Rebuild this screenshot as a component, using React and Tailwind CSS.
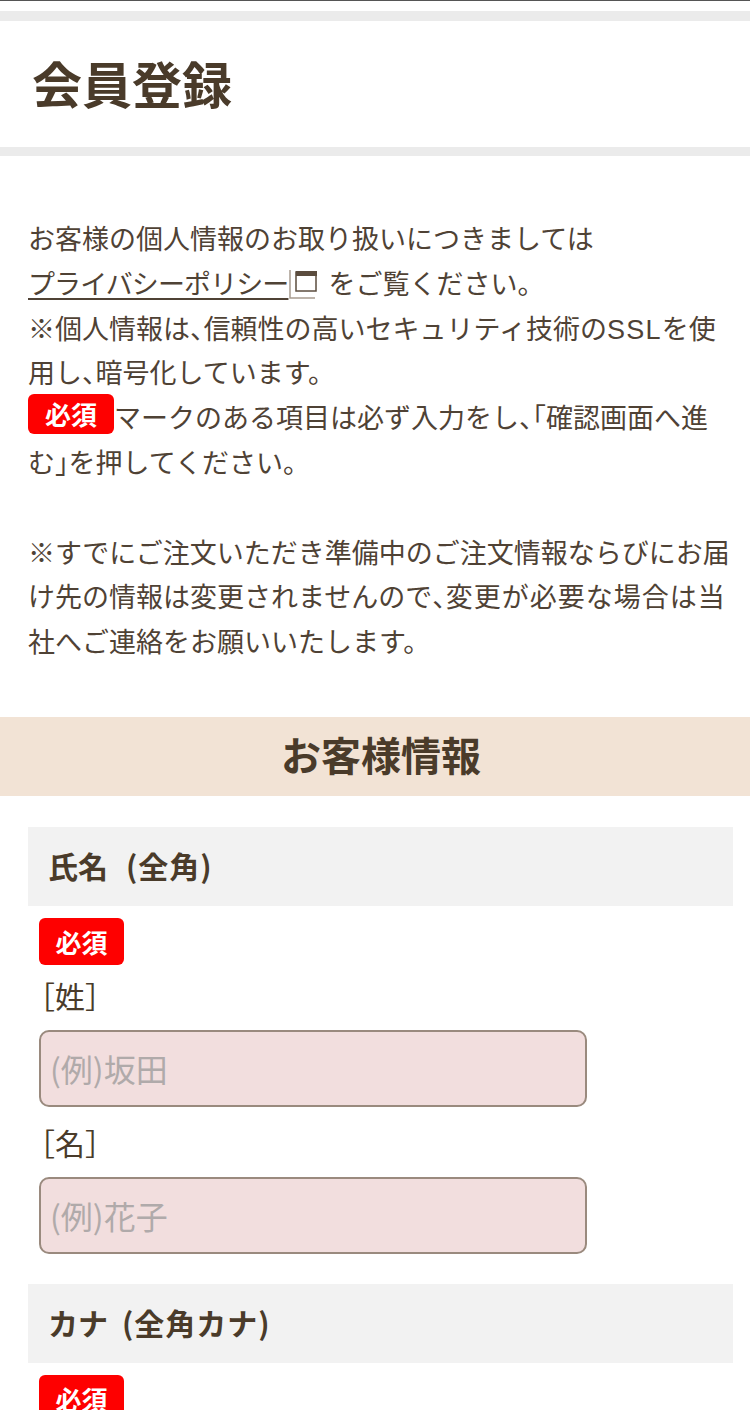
const font = { fontFamily: '"Noto Sans CJK JP", sans-serif' };

// punctuation sits half width in the reference
function Txt({ children }) {
  return children.split(/([、「」])/).map((part, i) =>
    i % 2 ? <span key={i} className="[font-feature-settings:'halt']">{part}</span> : part
  );
}

function Required({ className = '' }) {
  return (
    <span className={`inline-block bg-[#fe0000] text-white font-bold text-center rounded-[6px] ${className}`}>必須</span>
  );
}

function NameField({ label, placeholder }) {
  return (
    <div>
      <div className="text-[30px] leading-[44px] text-[#4a3b2a] pl-[1px]">
        <span className="[font-feature-settings:'halt']">［</span>{label}<span className="[font-feature-settings:'halt']">］</span>
      </div>
      <input
        readOnly
        placeholder={placeholder}
        className="block mt-[13px] w-[548px] h-[77px] bg-[#f2dede] border-2 border-[#9a8a7e] rounded-[10px] px-[9px] text-[32px] placeholder:text-[#b0aaaa] outline-none"
      />
    </div>
  );
}

function FieldHeading({ name, note, noteClass }) {
  return (
    <div className="ml-[28px] w-[705px] h-[79px] bg-[#f2f2f2] flex items-center pl-[20px] pb-[1px] text-[30px] font-bold text-[#4a3b2a]">
      {name}<span className={noteClass}>{note}</span>
    </div>
  );
}

export default function App() {
  return (
    <div className="h-[1410px] overflow-hidden bg-white text-[#4a3b2a]" style={font}>
      <div className="h-[1px] bg-[#555555]" />
      <div className="h-[10px]" />
      <div className="h-[10px] bg-[#ebebeb]" />
      <h1 className="h-[126px] flex items-center pl-[32px] pb-[4px] text-[50px] font-bold leading-none">会員登録</h1>
      <div className="h-[9px] bg-[#ebebeb]" />

      <div className="mt-[60px] pl-[28px] pr-[17px] text-[27px] leading-[44.8px] text-[#4f4235]">
        <p>
          お客様の個人情報のお取り扱いにつきましては<br />
          <span className="underline underline-offset-[4px] decoration-[2px] tracking-[-0.9px]">プライバシーポリシー</span>
          <svg className="inline-block align-[-6px]" width="30" height="31" viewBox="0 0 30 31">
            <path d="M2 1V29H27" fill="none" stroke="#a89c90" strokeWidth="1.5" />
            <rect x="8" y="3" width="20" height="19" fill="#fff" stroke="#5b4c3e" strokeWidth="1.5" />
            <rect x="8" y="2" width="21" height="5" fill="#5b4c3e" />
          </svg>
          <span className="ml-[4px]"> をご覧ください。</span><br />
          <Txt>※個人情報は、信頼性の高いセキュリティ技術の</Txt>
          <span className="tracking-[1.3px] leading-none" style={{ fontFamily: '"Liberation Sans", sans-serif' }}>SSL</span>
          <Txt>を使用し、暗号化しています。</Txt><br />
          <Required className="text-[26px] leading-[40px] w-[86px] h-[40px] -my-[8px] align-[3px]" />
          <Txt>マークのある項目は必ず入力をし、「確認画面へ進む」を押してください。</Txt>
        </p>
        <p className="mt-[44.8px]">
          <Txt>※すでにご注文いただき準備中のご注文情報ならびにお届け先の情報は変更されませんので、</Txt>
          <span className="tracking-[1px]">変更が必要な場合は</span>
          <Txt>当社へご連絡をお願いいたします。</Txt>
        </p>
      </div>

      <h2 className="mt-[53px] h-[79px] bg-[#f2e3d5] flex items-center justify-center pb-[4px] text-[40px] font-bold pl-[12px]">お客様情報</h2>

      <div className="mt-[31px]">
        <FieldHeading name="氏名" note="(全角)" noteClass="ml-[18px] tracking-[1px]" />
        <div className="pl-[39px] pt-[12px]">
          <Required className="text-[26px] leading-[47px] w-[85px] h-[47px]" />
          <div className="mt-[8px] flex flex-col gap-[13px]">
            <NameField label="姓" placeholder="(例)坂田" />
            <NameField label="名" placeholder="(例)花子" />
          </div>
        </div>
      </div>

      <div className="mt-[30px]">
        <FieldHeading name="カナ" note="(全角カナ)" noteClass="ml-[14px] tracking-[1px]" />
        <div className="pl-[39px] pt-[12px]">
          <Required className="text-[26px] leading-[47px] w-[85px] h-[47px]" />
        </div>
      </div>
    </div>
  );
}
